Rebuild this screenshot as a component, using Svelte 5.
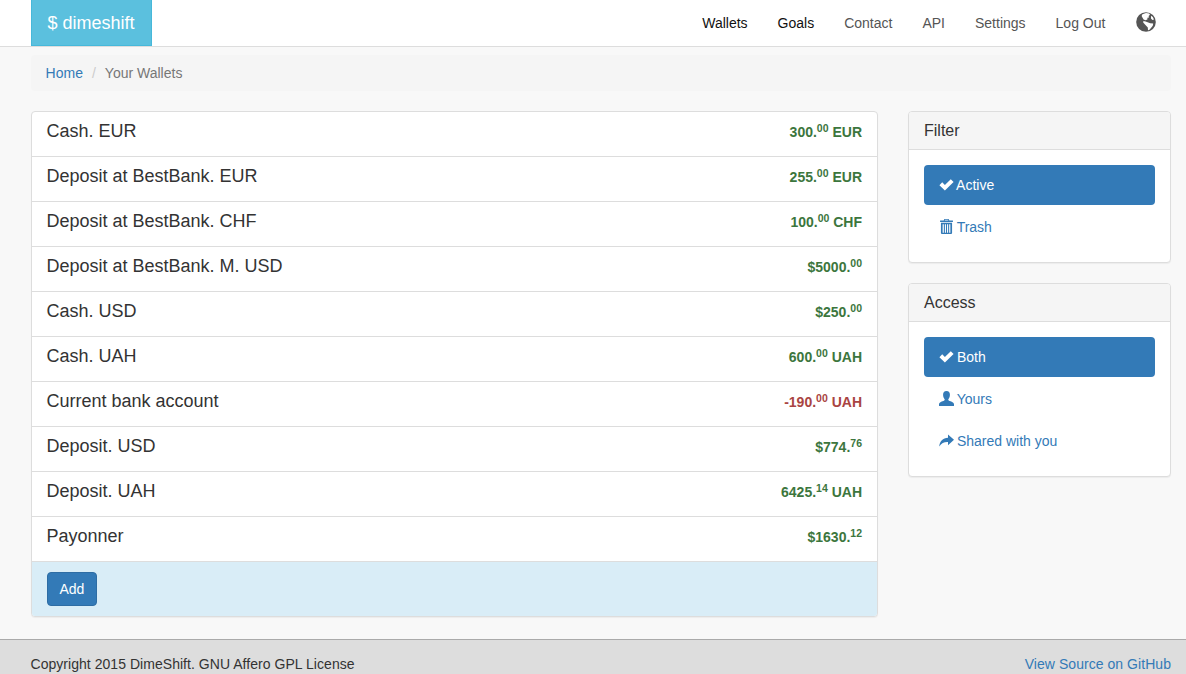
<script>
  const wallets = [
    { name: 'Cash. EUR', whole: '300.', cents: '00', unit: ' EUR' },
    { name: 'Deposit at BestBank. EUR', whole: '255.', cents: '00', unit: ' EUR' },
    { name: 'Deposit at BestBank. CHF', whole: '100.', cents: '00', unit: ' CHF' },
    { name: 'Deposit at BestBank. M. USD', whole: '$5000.', cents: '00', unit: '' },
    { name: 'Cash. USD', whole: '$250.', cents: '00', unit: '' },
    { name: 'Cash. UAH', whole: '600.', cents: '00', unit: ' UAH' },
    { name: 'Current bank account', whole: '-190.', cents: '00', unit: ' UAH', negative: true },
    { name: 'Deposit. USD', whole: '$774.', cents: '76', unit: '' },
    { name: 'Deposit. UAH', whole: '6425.', cents: '14', unit: ' UAH' },
    { name: 'Payonner', whole: '$1630.', cents: '12', unit: '' }
  ];

  const navLinks = [
    { label: 'Wallets', active: true },
    { label: 'Goals', active: true },
    { label: 'Contact' },
    { label: 'API' },
    { label: 'Settings' },
    { label: 'Log Out' }
  ];
</script>

{#snippet icon(name)}
  <svg class="icon" viewBox="0 0 14 14" aria-hidden="true">
    {#if name === 'ok'}
      <path d="M0.4 7.6 L3 5 L5.5 7.5 L11 2 L13.6 4.6 L5.5 12.7 Z" />
    {:else if name === 'trash'}
      <path d="M5 0 H9 L9.6 1.4 H13 V2.8 H1 V1.4 H4.4 Z M5.6 0.7 L5.3 1.4 H8.7 L8.4 0.7 Z" fill-rule="evenodd" />
      <path d="M1.8 3.6 H12.2 V13 Q12.2 14 11.2 14 H2.8 Q1.8 14 1.8 13 Z M3.4 4.8 V12.8 H4.5 V4.8 Z M5.5 4.8 V12.8 H6.5 V4.8 Z M7.5 4.8 V12.8 H8.5 V4.8 Z M9.5 4.8 V12.8 H10.6 V4.8 Z" fill-rule="evenodd" />
    {:else if name === 'user'}
      <path d="M7 0 C9.2 0 10.2 1.6 10.2 3.6 C10.2 5.4 9.4 7 8.7 7.8 C8.5 8.6 9 9 10 9.4 C12 10.2 13.8 10.8 14 12.2 V14 H0 V12.2 C0.2 10.8 2 10.2 4 9.4 C5 9 5.5 8.6 5.3 7.8 C4.6 7 3.8 5.4 3.8 3.6 C3.8 1.6 4.8 0 7 0 Z" />
    {:else if name === 'share'}
      <path d="M8.4 1.4 L14 6.4 L8.4 11.4 V8.4 C5 8.2 2.4 9.2 0.2 12.6 C0.6 7.8 3.6 4.6 8.4 4.4 Z" />
    {/if}
  </svg>
{/snippet}

<div class="page">
  <header class="navbar">
    <a class="brand" href="#home">$ dimeshift</a>
    <nav class="nav">
      {#each navLinks as link}
        <a href="#nav" class:active={link.active}>{link.label}</a>
      {/each}
      <a href="#lang" class="globe-link" aria-label="Language">
        <svg class="globe" viewBox="0 0 20 20" aria-hidden="true">
          <circle cx="10" cy="10" r="9.8" fill="#555" />
          <path fill="#fff" d="M6.4 2.2 L10 1 L13.2 1.4 L14 2.8 L12.6 4 L13 5.4 L11.4 5.8 L11.4 7.4 L9.4 8.2 L7.6 7.4 L6.4 5.6 L5.6 4 Z" />
          <path fill="#fff" d="M7.4 9 L9.6 9.4 L11.6 10.2 L14.2 11.2 L17.2 11.6 L16.8 13.8 L15 16 L13.2 18 L12 18.2 L11.8 15.6 L10.4 14 L9 12.4 L7.2 10.6 Z" />
          <path fill="#fff" d="M15 3.8 L16.8 5 L18 7.4 L16.4 8 L15 6.4 Z" />
        </svg>
      </a>
    </nav>
  </header>

  <main class="container">
    <ol class="breadcrumb">
      <li><a href="#home">Home</a></li>
      <li class="sep">/</li>
      <li class="current">Your Wallets</li>
    </ol>

    <div class="columns">
      <section class="wallets">
        {#each wallets as w}
          <div class="wallet">
            <span class="wallet-name">{w.name}</span>
            <span class="amount" class:negative={w.negative}>{w.whole}<sup>{w.cents}</sup>{w.unit}</span>
          </div>
        {/each}
        <div class="wallet-footer">
          <button class="btn-add" type="button">Add</button>
        </div>
      </section>

      <aside class="sidebar">
        <div class="panel">
          <div class="panel-heading">Filter</div>
          <div class="panel-body">
            <a class="pill selected" href="#active">{@render icon('ok')} Active</a>
            <a class="pill" href="#trash">{@render icon('trash')} Trash</a>
          </div>
        </div>
        <div class="panel">
          <div class="panel-heading">Access</div>
          <div class="panel-body">
            <a class="pill selected" href="#both">{@render icon('ok')} Both</a>
            <a class="pill" href="#yours">{@render icon('user')} Yours</a>
            <a class="pill" href="#shared">{@render icon('share')} Shared with you</a>
          </div>
        </div>
      </aside>
    </div>
  </main>

  <footer class="footer">
    <span class="copyright">Copyright 2015 DimeShift. GNU Affero GPL License</span>
    <a class="source" href="#github">View Source on GitHub</a>
  </footer>
</div>

<style>
  :global(body) {
    margin: 0;
    background: #f8f8f8;
    color: #333;
    font-family: "Liberation Sans", Arial, sans-serif;
    font-size: 14px;
    line-height: 20px;
    overflow: hidden;
  }

  a {
    color: #337ab7;
    text-decoration: none;
  }

  .page {
    display: flex;
    flex-direction: column;
    height: 674px;
    overflow: hidden;
  }

  .navbar {
    display: flex;
    justify-content: space-between;
    height: 46px;
    padding: 0 15px 0 31px;
    background: #fff;
    border-bottom: 1px solid #ddd;
  }

  .brand {
    padding: 13px 0 13px 15.4px;
    width: 121px;
    height: 46px;
    box-sizing: border-box;
    background: #5bc0de;
    border: 1px solid #46b8da;
    border-width: 0 1px 1px;
    color: #fff;
    font-size: 18px;
    white-space: nowrap;
  }

  .nav {
    display: flex;
  }

  .nav a {
    padding: 13px 15px;
    color: #555;
  }

  .nav a.active {
    color: #111;
  }

  .nav a.globe-link {
    padding: 12px 15px 12px 15.6px;
  }

  .globe {
    display: block;
    width: 20px;
    height: 20px;
  }

  .container {
    flex: 1;
    padding: 8px 15px 0 31px;
  }

  .breadcrumb {
    display: flex;
    gap: 9px;
    margin: 0 0 20px;
    padding: 8px 15px 8px 14.6px;
    list-style: none;
    background: #f5f5f5;
    border-radius: 4px;
  }

  .sep {
    color: #ccc;
  }

  .current {
    color: #777;
  }

  .columns {
    display: flex;
    align-items: flex-start;
    gap: 30px;
  }

  .wallets {
    width: 847px;
    box-sizing: border-box;
    background: #fff;
    border: 1px solid #ddd;
    border-radius: 4px;
    overflow: hidden;
    box-shadow: 0 1px 1px rgba(0, 0, 0, 0.05);
  }

  .wallet {
    display: flex;
    justify-content: space-between;
    height: 45px;
    box-sizing: border-box;
    padding: 9px 15px 0 14.5px;
    border-bottom: 1px solid #ddd;
  }

  .wallet-name {
    font-size: 18px;
    line-height: 20px;
  }

  .amount {
    padding-top: 1px;
    font-weight: bold;
    color: #3c763d;
  }

  .amount.negative {
    color: #a94442;
  }

  sup {
    font-size: 75%;
    line-height: 0;
    position: relative;
    top: -0.5em;
    vertical-align: baseline;
  }

  .wallet-footer {
    padding: 10px 15px;
    background: #d9edf7;
  }

  .btn-add {
    display: block;
    padding: 6px 11.5px;
    height: 34px;
    box-sizing: border-box;
    background: #337ab7;
    border: 1px solid #2e6da4;
    border-radius: 4px;
    color: #fff;
    font: inherit;
  }

  .sidebar {
    flex: 1;
    display: flex;
    flex-direction: column;
    gap: 20px;
  }

  .panel {
    background: #fff;
    border: 1px solid #ddd;
    border-radius: 4px;
    overflow: hidden;
    box-shadow: 0 1px 1px rgba(0, 0, 0, 0.05);
  }

  .panel-heading {
    padding: 10px 15px;
    height: 38px;
    box-sizing: border-box;
    background: #f5f5f5;
    border-bottom: 1px solid #ddd;
    font-size: 16px;
    line-height: 18px;
  }

  .panel-body {
    display: flex;
    flex-direction: column;
    gap: 2px;
    padding: 15px;
  }

  .pill {
    display: block;
    height: 40px;
    box-sizing: border-box;
    padding: 10px 15px;
    border-radius: 4px;
  }

  .pill.selected {
    background: #337ab7;
    color: #fff;
  }

  .icon {
    display: inline-block;
    width: 15px;
    height: 15px;
    margin: 0 -0.5px;
    vertical-align: -2px;
    fill: currentColor;
  }

  .footer {
    display: flex;
    justify-content: space-between;
    height: 35px;
    box-sizing: border-box;
    padding: 14px 15px 0 30.5px;
    background: #ddd;
    border-top: 1px solid #aaa;
  }

  .copyright {
    letter-spacing: 0.04px;
  }

  .source {
    letter-spacing: 0.05px;
  }
</style>
